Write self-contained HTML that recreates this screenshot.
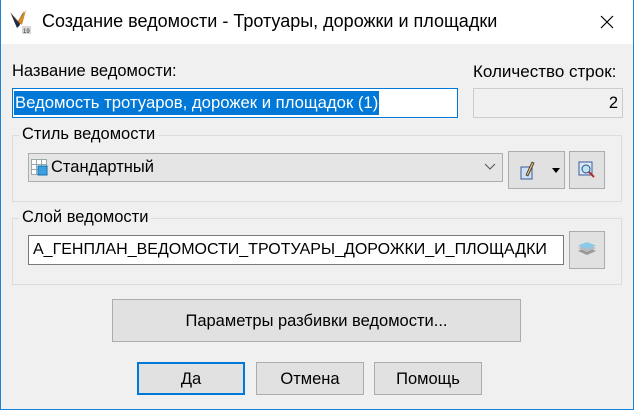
<!DOCTYPE html>
<html><head><meta charset="utf-8"><style>
*{box-sizing:border-box;margin:0;padding:0}
body{width:634px;height:410px;overflow:hidden;background:#f0f0f0;font-family:"Liberation Sans",sans-serif;font-size:16.5px;color:#000;position:relative}
.win{position:absolute;left:0;top:0;width:634px;height:410px;border:1px solid #1883d7;border-top:none}
.title{position:absolute;left:0;top:0;width:634px;height:44px;background:#fff}
.a{position:absolute;white-space:nowrap}
.box{position:absolute;border:1px solid #dcdcdc}
.btn{position:absolute;background:#e1e1e1;border:1px solid #adadad;text-align:center;font-size:16.5px}
.lbl{background:#f0f0f0;padding:0 3px}
</style></head><body>
<div class="title"></div>
<svg class="a" style="left:8px;top:9px" width="24" height="26" viewBox="0 0 24 26">
<path d="M2 3 L10 12 L16 2 L13 14 L10 18 Z" fill="#6b4a2a"/>
<path d="M10 12 L18 1 L14 16 Z" fill="#d68a2a"/>
<path d="M3 5 L12 16 L9 19 Z" fill="#1b2a4a"/>
<rect x="14" y="17" width="9" height="8" fill="#d8d8d8"/>
<text x="15" y="24" font-size="6" font-family="Liberation Sans" fill="#333">19</text>
</svg>
<div class="a" style="left:42px;top:11px;font-size:18px">Создание ведомости - Тротуары, дорожки и площадки</div>
<svg class="a" style="left:600px;top:15px" width="14" height="14"><path d="M1 1L13 13M13 1L1 13" stroke="#000" stroke-width="1.2"/></svg>
<div class="win"></div>

<div class="a" style="left:12px;top:62px">Название ведомости:</div>
<div class="a" style="left:12px;top:88px;width:446px;height:30px;background:#fff;border:1px solid #0078d7"></div>
<div class="a" style="left:14px;top:91px;height:24px;padding:2px 1px;background:#0078d7;color:#fff;font-size:16.7px;line-height:20px">Ведомость тротуаров, дорожек и площадок (1)</div>

<div class="a" style="left:473px;top:62px;font-size:17px">Количество строк:</div>
<div class="a" style="left:473px;top:88px;width:150px;height:30px;background:#f0f0f0;border:1px solid #cccccc;text-align:right;padding:5px 4px;font-size:16.5px">2</div>

<div class="box" style="left:12px;top:135px;width:610px;height:67px"></div>
<div class="a lbl" style="left:19px;top:125px">Стиль ведомости</div>
<div class="a" style="left:28px;top:153px;width:475px;height:29px;background:#e5e5e5;border:1px solid #adadad"></div>
<svg class="a" style="left:31px;top:159px" width="17" height="17"><rect x="0.5" y="0.5" width="15" height="15" fill="#fff" stroke="#9aa"/><path d="M5.5 0.5V16M10.5 0.5V16M0.5 5.5H16M0.5 10.5H16" stroke="#9aa"/><rect x="7" y="7" width="9" height="9" fill="#3aa0e0" stroke="#1670b0"/></svg>
<div class="a" style="left:51px;top:158px">Стандартный</div>
<svg class="a" style="left:484px;top:163px" width="12" height="8"><path d="M1 1L6 6L11 1" stroke="#555" fill="none"/></svg>
<div class="btn" style="left:508px;top:151px;width:57px;height:38px"></div>
<svg class="a" style="left:520px;top:160px" width="16" height="20"><rect x="1" y="7" width="11" height="12" fill="#cfe0f5" stroke="#3a5a9a"/><path d="M6 15L12 2L14 3L8 16Z" fill="#e0b060" stroke="#333" stroke-width="0.8"/></svg>
<svg class="a" style="left:552px;top:168px" width="8" height="5"><path d="M0 0H8L4 5Z" fill="#000"/></svg>
<div class="btn" style="left:569px;top:151px;width:36px;height:38px"></div>
<svg class="a" style="left:578px;top:161px" width="18" height="18"><rect x="1" y="1" width="13" height="13" fill="#dbe8f8" stroke="#3a5a9a"/><circle cx="8" cy="8" r="4" fill="#bfe3f7" stroke="#2a5080"/><path d="M11 11L16 16" stroke="#b03030" stroke-width="2"/></svg>

<div class="box" style="left:12px;top:218px;width:610px;height:67px"></div>
<div class="a lbl" style="left:19px;top:208px">Слой ведомости</div>
<div class="a" style="left:28px;top:235px;width:536px;height:30px;background:#fff;border:1px solid #7a7a7a;padding:5px 4px;font-size:16px">А_ГЕНПЛАН_ВЕДОМОСТИ_ТРОТУАРЫ_ДОРОЖКИ_И_ПЛОЩАДКИ</div>
<div class="btn" style="left:569px;top:231px;width:36px;height:38px"></div>
<svg class="a" style="left:577px;top:242px" width="20" height="14"><path d="M1 9L10 13L19 9L10 5Z" fill="#999"/><path d="M1 6L10 10L19 6L10 2Z" fill="#bbb"/><path d="M1 3.5L10 7.5L19 3.5L10 0Z" fill="#8cc8e8"/></svg>

<div class="btn" style="left:112px;top:299px;width:409px;height:43px;padding-top:12px">Параметры разбивки ведомости...</div>
<div class="btn" style="left:137px;top:362px;width:108px;height:33px;border:2px solid #0078d7;padding-top:6px">Да</div>
<div class="btn" style="left:256px;top:362px;width:108px;height:33px;padding-top:7px">Отмена</div>
<div class="btn" style="left:374px;top:362px;width:108px;height:33px;padding-top:7px">Помощь</div>
</body></html>
